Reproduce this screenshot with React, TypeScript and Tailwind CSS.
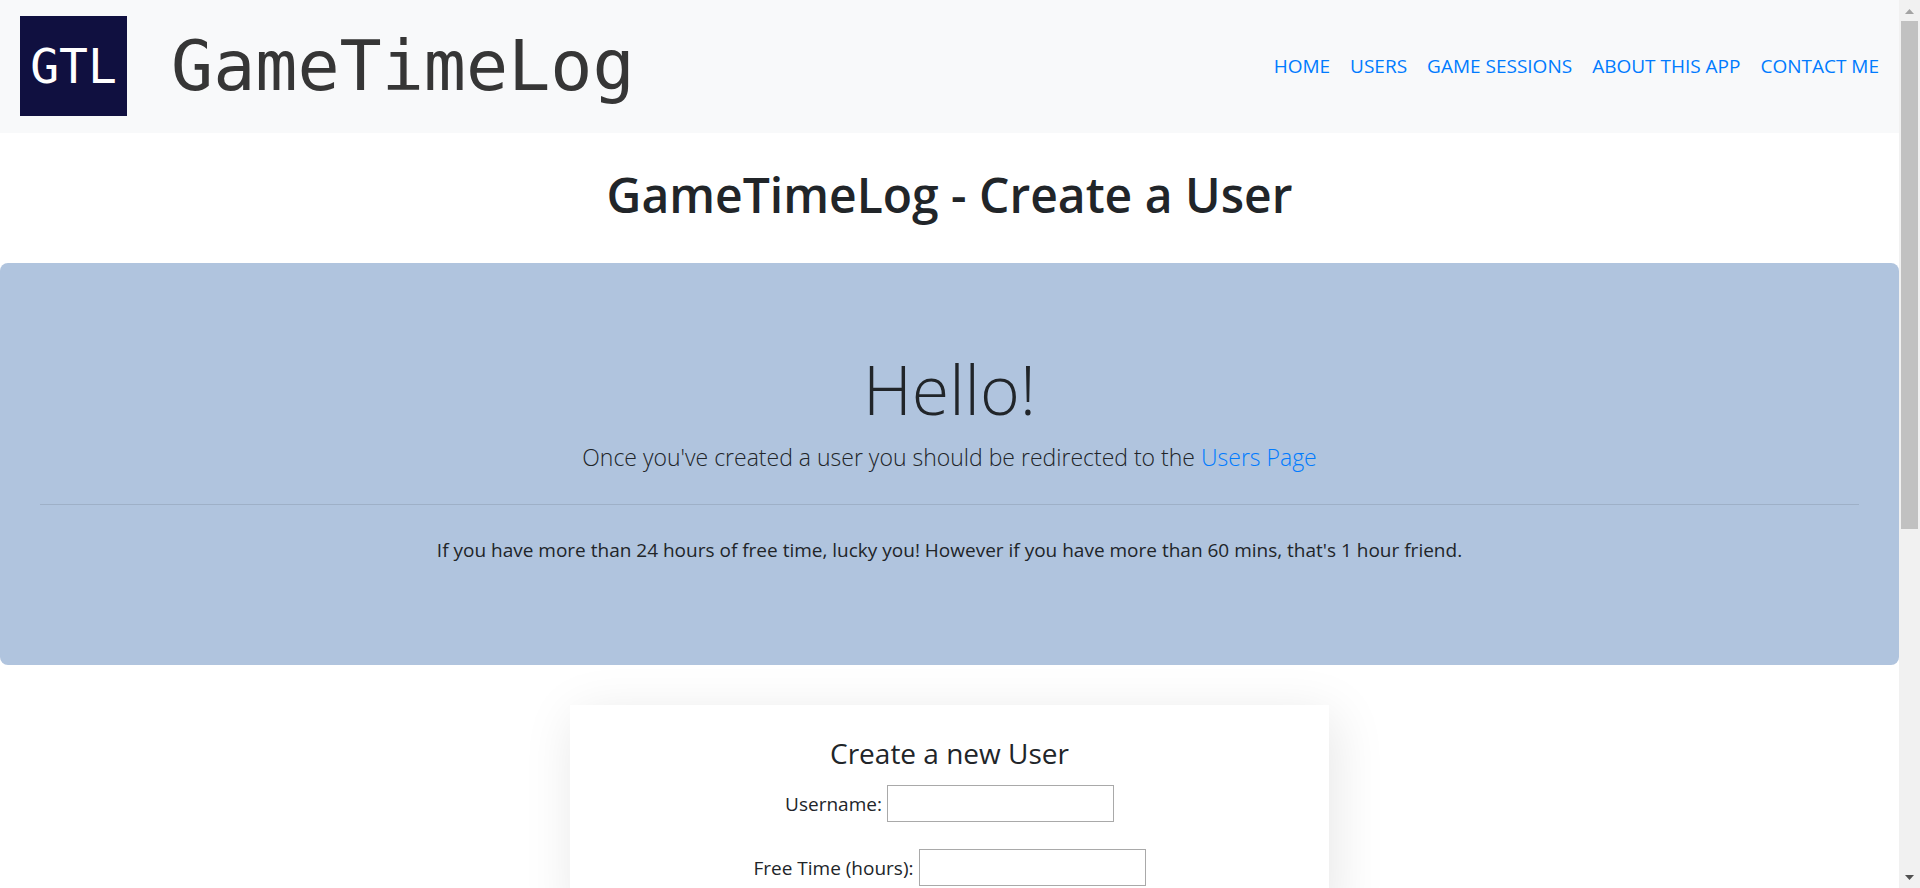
const links = ["HOME", "USERS", "GAME SESSIONS", "ABOUT THIS APP", "CONTACT ME"];

function Header() {
  return (
    <header className="flex items-center justify-between bg-[#f8f9fa] px-5 pt-4 pb-[17px]">
      <a href="#home" className="flex items-center gap-11">
        <span className="flex h-[100px] w-[107px] items-center justify-center bg-[#101040] font-['DejaVu_Sans_Mono',monospace] text-[48px] leading-none text-white">
          GTL
        </span>
        <span className="font-['DejaVu_Sans_Mono',monospace] text-[70px] leading-[100px] text-[#363636]">
          GameTimeLog
        </span>
      </a>
      <nav className="flex gap-5 text-[19px] leading-[30px] text-[#007bff]">
        {links.map((label) => (
          <a key={label} href="#nav">
            {label}
          </a>
        ))}
      </nav>
    </header>
  );
}

function Intro() {
  return (
    <section className="rounded-lg bg-[#b0c4de] px-10 py-20">
      <h2 className="pt-1 pb-2 text-[68px] leading-[84px] font-light">Hello!</h2>
      <p className="text-[23px] leading-9 font-light">
        Once you've created a user you should be redirected to the{" "}
        <a href="#users" className="text-[#007bff]">
          Users Page
        </a>
      </p>
      <hr className="mt-[29px] mb-[30px] border-t border-black/10" />
      <p className="mb-5 text-[19px] leading-[30px]">
        If you have more than 24 hours of free time, lucky you! However if you have more than 60
        mins, that's 1 hour friend.
      </p>
    </section>
  );
}

function Field({ id, label }: { id: string; label: string }) {
  return (
    <div className="flex items-center justify-center gap-[5px]">
      <label htmlFor={id}>{label}</label>
      <input id={id} type="text" className="h-[37px] w-[227px] border border-[#a9a9a9] bg-white px-1" />
    </div>
  );
}

function UserForm() {
  return (
    <form className="mx-auto mt-10 w-2/5 bg-white px-8 py-[30px] text-[19px] leading-[30px] shadow-[5px_10px_50px_rgba(0,0,0,0.1)]">
      <h3 className="mb-[14px] text-[28px] leading-9">Create a new User</h3>
      <div className="flex flex-col gap-[27px]">
        <Field id="username" label="Username:" />
        <Field id="hours" label="Free Time (hours):" />
      </div>
    </form>
  );
}

function ScrollRail() {
  return (
    <div aria-hidden="true" className="flex w-[21px] shrink-0 flex-col bg-[#f1f1f1]">
      <div className="flex h-[21px] items-center justify-center">
        <svg width="9" height="5" viewBox="0 0 9 5" className="mt-0.5">
          <path d="M4.5 0 9 5H0z" fill="#a3a3a3" />
        </svg>
      </div>
      <div className="mx-0.5 flex-[3] bg-[#c1c1c1]" />
      <div className="flex-[2]" />
      <div className="flex h-[21px] items-center justify-center">
        <svg width="9" height="5" viewBox="0 0 9 5">
          <path d="M0 0h9L4.5 5z" fill="#505050" />
        </svg>
      </div>
    </div>
  );
}

export default function App() {
  return (
    <div className="flex h-screen bg-white font-['Open_Sans',sans-serif] text-[#212529]">
      <div className="min-w-0 flex-1 overflow-hidden">
        <Header />
        <main className="text-center">
          <h1 className="pt-8 pb-[38px] text-[48px] leading-[60px] font-semibold">
            GameTimeLog - Create a User
          </h1>
          <Intro />
          <UserForm />
        </main>
      </div>
      <ScrollRail />
    </div>
  );
}
